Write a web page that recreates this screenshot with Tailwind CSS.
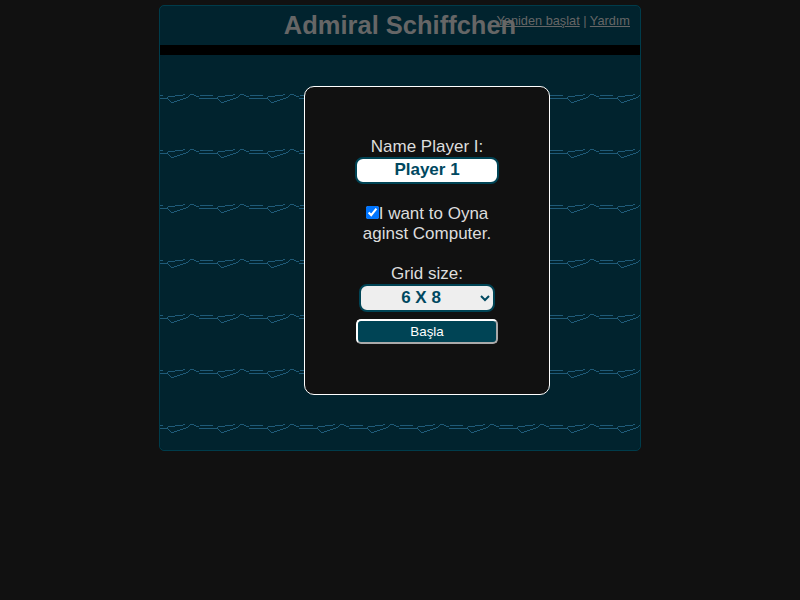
<!DOCTYPE html>
<html>
<head>
<meta charset="utf-8">
<title>Admiral Schiffchen</title>
<script src="https://cdn.jsdelivr.net/npm/@tailwindcss/browser@4"></script>
</head>
<body class="bg-[#111111] h-[600px] overflow-hidden font-['Liberation_Sans',Arial,sans-serif]">
<div class="w-[482px] h-[446px] mx-auto relative top-[5px] border border-[#003c4b] rounded-[5px] bg-[#01232e] overflow-hidden flex flex-col">
  <header class="h-[39px] shrink-0 relative text-center">
    <h1 class="text-[25.5px] leading-[39px] font-bold text-[#666666]">Admiral Schiffchen</h1>
    <div class="absolute right-[10px] top-[7px] text-[12.75px] leading-[15px] text-[#666666]"><a class="underline" href="#">Yeniden başlat</a> | <a class="underline" href="#">Yardım</a></div>
  </header>
  <div class="h-[10px] shrink-0 bg-black"></div>
  <div class="flex-1 relative rounded-[5px] bg-[#01232e]">
    <svg class="absolute inset-0" width="480" height="395" xmlns="http://www.w3.org/2000/svg">
      <defs>
        <pattern id="w" x="0" y="0" width="50" height="55" patternUnits="userSpaceOnUse">
          <path fill="none" stroke="#1f5a78" stroke-width="1" shape-rendering="crispEdges" d="M0 43.5H8M8 44.5H9M9 45.5H10M10 46.5H11M11 47.5H14M14 46.5H17M17 45.5H20M20 44.5H23M23 43.5H26M26 42.5H28M28 41.5H29M29 40.5H30M30 39.5H34M34 40.5H36M36 41.5H39M40 40.5H50M0 40.5H3M39 43.5H50M7 42.5H8M8 41.5H15M15 40.5H23M23 39.5H25"/>
        </pattern>
      </defs>
      <rect width="480" height="395" fill="url(#w)"/>
    </svg>
    <div class="absolute left-[144px] top-[31px] w-[246px] h-[309px] bg-[#111111] border border-white rounded-[10px] flex flex-col items-center text-[17px] leading-[20px] text-[#dddddd] text-center pt-[50px]">
      <label>Name Player I:</label>
      <input class="w-[144px] h-[27px] rounded-[8px] border-2 border-[#004455] bg-white text-center font-bold text-[#004860] text-[17px] pb-[2px]" value="Player 1">
      <div class="mt-[20px] w-[140px]"><input type="checkbox" checked class="w-[13px] h-[13px] align-[0px]">I want to Oyna aginst Computer.</div>
      <label class="mt-[20px]">Grid size:</label>
      <select class="w-[136px] h-[28px] rounded-[8px] border-2 border-[#004455] bg-[#eeeeee] text-center font-bold text-[#004860] text-[17px] pb-px"><option>6 X 8</option></select>
      <button class="w-[142px] h-[25px] mt-[7px] rounded-[5px] border-2 border-t-white border-l-white border-r-[#aaaaaa] border-b-[#aaaaaa] bg-[#004455] text-white text-[13.33px]">Başla</button>
    </div>
  </div>
</div>
</body>
</html>
